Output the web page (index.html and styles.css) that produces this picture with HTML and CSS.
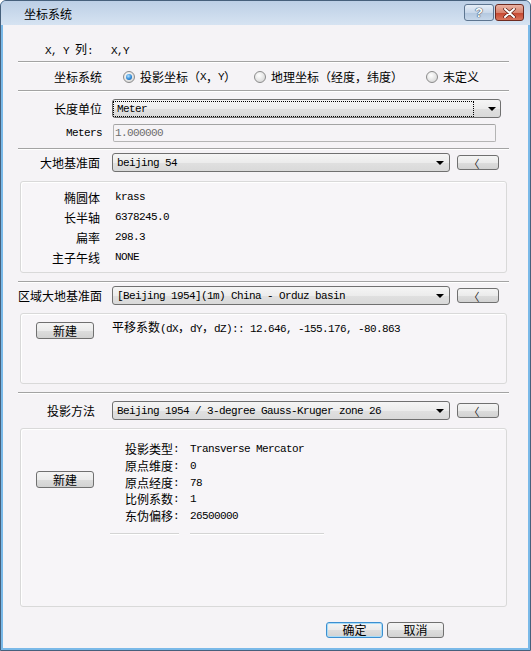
FILE: index.html
```html
<!DOCTYPE html>
<html lang="zh-CN">
<head>
    <meta charset="UTF-8">
    <title>坐标系统</title>
    <link rel="stylesheet" href="styles.css">
</head>
<body>

<div class="window">
    <!-- Title bar -->
    <div class="titlebar">
        <span class="title">坐标系统</span>
        <div class="caption-btns">
            <div class="cap-btn help">?</div>
            <div class="cap-btn close">
                <svg width="13" height="10" viewBox="0 0 13 10">
                    <path d="M2 1 L11 9 M11 1 L2 9" stroke="#5a1d14" stroke-width="3.4" stroke-linecap="round"/>
                    <path d="M2 1 L11 9 M11 1 L2 9" stroke="#fff" stroke-width="2" stroke-linecap="round"/>
                </svg>
            </div>
        </div>
    </div>

    <div class="client">
        <div class="xy-row"><span class="m">X, Y </span>列<span class="m">:   X,Y</span></div>
        <div class="sep"></div>

        <!-- coordinate system -->
        <div class="row radio-row">
            <span class="label">坐标系统</span>
            <div class="radios">
                <span class="radio checked"><span class="dot"></span>投影坐标（<span class="m">X</span>，<span class="m">Y</span>）</span>
                <span class="radio"><span class="dot"></span>地理坐标（经度，纬度）</span>
                <span class="radio"><span class="dot"></span>未定义</span>
            </div>
        </div>
        <div class="sep"></div>

        <!-- length unit -->
        <div class="row unit-row">
            <span class="label">长度单位</span>
            <div class="combo combo-unit">
                <span class="combo-text focus m">Meter</span>
                <span class="arrow"></span>
            </div>
        </div>
        <div class="row meters-row">
            <span class="label m">Meters</span>
            <div class="textbox m">1.000000</div>
        </div>
        <div class="sep sep-unit"></div>

        <!-- datum -->
        <div class="row datum-row">
            <span class="label label-datum">大地基准面</span>
            <div class="combo">
                <span class="combo-text m">beijing 54</span>
                <span class="arrow"></span>
            </div>
            <div class="btn back-btn">〈</div>
        </div>
        <div class="panel datum-panel">
            <div class="prop"><span class="prop-key">椭圆体</span><span class="m">krass</span></div>
            <div class="prop"><span class="prop-key">长半轴</span><span class="m">6378245.0</span></div>
            <div class="prop"><span class="prop-key">扁率</span><span class="m">298.3</span></div>
            <div class="prop"><span class="prop-key">主子午线</span><span class="m">NONE</span></div>
        </div>
        <div class="sep sep-datum"></div>

        <!-- regional datum -->
        <div class="row region-row">
            <span class="label">区域大地基准面</span>
            <div class="combo">
                <span class="combo-text m">[Beijing 1954](1m) China - Orduz basin</span>
                <span class="arrow"></span>
            </div>
            <div class="btn back-btn">〈</div>
        </div>
        <div class="panel shift-panel">
            <div class="btn new-btn">新建</div>
            <span class="shift-text">平移系数<span class="m">(dX</span>，<span class="m">dY</span>，<span class="m">dZ):: 12.646, -155.176, -80.863</span></span>
        </div>
        <div class="sep sep-region"></div>

        <!-- projection -->
        <div class="row proj-row">
            <span class="label label-proj">投影方法</span>
            <div class="combo">
                <span class="combo-text m">Beijing 1954 / 3-degree Gauss-Kruger zone 26</span>
                <span class="arrow"></span>
            </div>
            <div class="btn back-btn">〈</div>
        </div>
        <div class="panel proj-panel">
            <div class="proj-body">
                <div class="btn new-btn proj-new">新建</div>
                <div class="proj-info">
                    <span>投影类型<span class="m">:</span></span><span class="m">Transverse Mercator</span>
                    <span>原点维度<span class="m">:</span></span><span class="m">0</span>
                    <span>原点经度<span class="m">:</span></span><span class="m">78</span>
                    <span>比例系数<span class="m">:</span></span><span class="m">1</span>
                    <span>东伪偏移<span class="m">:</span></span><span class="m">26500000</span>
                </div>
            </div>
            <div class="proj-lines">
                <span class="uline uline-short"></span>
                <span class="uline uline-long"></span>
            </div>
        </div>

        <div class="footer">
            <div class="btn dlg-btn default">确定</div>
            <div class="btn dlg-btn">取消</div>
        </div>
    </div>
</div>

</body>
</html>
```

FILE: styles.css
```css
body {
    margin: 0;
    font-family: "Noto Sans CJK SC", sans-serif;
    font-size: 12px;
    color: #000;
    background: #fff;
}

.m {
    font-family: "Liberation Mono", "Noto Sans CJK SC", monospace;
    font-size: 11px;
    letter-spacing: -0.6px;
}

.window {
    width: 531px;
    height: 651px;
    box-sizing: border-box;
    border: 1px solid #46607c;
    border-radius: 6px 6px 0 0;
    background: #7ab9e8;
    overflow: hidden;
}

/* title bar */
.titlebar {
    height: 24px;
    display: flex;
    justify-content: space-between;
    align-items: flex-start;
    background: linear-gradient(to bottom, #bccfe6, #d6e3f2);
}

.title {
    margin: 6px 0 0 23px;
    line-height: 14px;
}

.caption-btns {
    display: flex;
    margin: 3px 6px 0 0;
}

.cap-btn {
    height: 15px;
    border: 1px solid #5d7590;
    border-radius: 3px;
    display: flex;
    align-items: center;
    justify-content: center;
    box-sizing: content-box;
}

.help {
    width: 28px;
    background: linear-gradient(to bottom, #e6eef8, #c9d8ea 50%, #b3c7df 51%, #c6d7ea);
    color: #fff;
    font-family: "Liberation Sans", sans-serif;
    font-weight: bold;
    font-size: 13px;
    text-shadow: 0 0 1px #3d5168, 0 0 1px #3d5168, 0 0 1px #3d5168;
    margin-right: 1px;
}

.close {
    width: 27px;
    border-color: #6e2a20;
    background: linear-gradient(to bottom, #eab2a3, #d9846f 50%, #c5452e 51%, #d9745c);
}

/* client area */
.client {
    margin: 0 2px;
    height: 623px;
    background: #f5f3f6;
}

.xy-row {
    height: 36px;
    box-sizing: border-box;
    padding: 17px 0 0 42px;
    line-height: 14px;
    white-space: pre;
}

.sep {
    margin-left: 15px;
    width: 491px;
    height: 1px;
    background: #a3a3a3;
    border-bottom: 1px solid #fff;
}

.row {
    display: flex;
    align-items: center;
    padding-left: 15px;
}

.label {
    width: 84px;
    text-align: right;
    flex-shrink: 0;
    line-height: 14px;
}

.label-datum {
    padding-right: 2px;
    box-sizing: border-box;
}

.label-proj {
    padding-right: 7px;
    box-sizing: border-box;
}

/* radios */
.radio-row {
    height: 27px;
}

.radios {
    display: grid;
    grid-template-columns: 131px 172px auto;
    margin-left: 21px;
}

.radio {
    display: flex;
    align-items: center;
    white-space: nowrap;
    line-height: 14px;
}

.dot {
    width: 10px;
    height: 10px;
    border: 1px solid #8b8b8b;
    border-radius: 50%;
    background: radial-gradient(circle at 40% 35%, #ffffff, #e2e2e2 60%, #cfcfcf);
    margin-right: 5px;
    position: relative;
}

.checked .dot::after {
    content: "";
    position: absolute;
    left: 2px;
    top: 2px;
    width: 6px;
    height: 6px;
    border-radius: 50%;
    background: radial-gradient(circle at 40% 35%, #b4e2ff, #2f8ad8 55%, #17508f);
}

/* combos and inputs */
.unit-row {
    margin-top: 7px;
}

.combo {
    margin-left: 10px;
    width: 338px;
    height: 19px;
    box-sizing: border-box;
    border: 1px solid #707070;
    border-radius: 3px;
    background: linear-gradient(to bottom, #f5f5f5, #ececec 50%, #e0e0e0 51%, #d9d9d9);
    display: flex;
    align-items: center;
    padding: 0 5px 0 4px;
}

.combo-unit {
    width: 389px;
    padding: 1px 4px 1px 1px;
}

.combo-text {
    flex: 1;
    white-space: nowrap;
    overflow: hidden;
    line-height: 14px;
}

.combo-text.focus {
    outline: 1px dotted #000;
    padding-left: 3px;
    margin-right: 15px;
}

.arrow {
    width: 0;
    height: 0;
    border-left: 4px solid transparent;
    border-right: 4px solid transparent;
    border-top: 4px solid #000;
    margin-top: 1px;
}

.meters-row {
    margin-top: 6px;
}

.textbox {
    margin-left: 11px;
    width: 383px;
    height: 18px;
    box-sizing: border-box;
    border: 1px solid #b4b4b4;
    border-top-color: #a3a3a3;
    border-radius: 2px;
    color: #6d6d6d;
    padding-left: 1px;
    line-height: 16px;
}

.sep-unit {
    margin-top: 6px;
}

.datum-row {
    margin-top: 3px;
}

.btn {
    box-sizing: border-box;
    border: 1px solid #707070;
    border-radius: 3px;
    background: linear-gradient(to bottom, #f4f4f4, #ebebeb 50%, #dddddd 51%, #d2d2d2);
    display: flex;
    align-items: center;
    justify-content: center;
    line-height: 14px;
}

.back-btn {
    margin-left: 7px;
    width: 42px;
    height: 15px;
    font-size: 11px;
    color: #222;
    padding-right: 8px;
}

/* panels */
.panel {
    margin-left: 17px;
    width: 487px;
    box-sizing: border-box;
    border: 1px solid #d9d9d9;
    border-radius: 3px;
    box-shadow: inset 1px 1px 0 #fff;
    background: #f7f5f8;
}

.datum-panel {
    margin-top: 9px;
    height: 92px;
    padding-top: 5px;
}

.prop {
    display: flex;
    align-items: center;
    height: 20px;
}

.prop-key {
    width: 79px;
    text-align: right;
    margin-right: 15px;
}

.sep-datum {
    margin-top: 8px;
}

.region-row {
    margin-top: 3px;
}

.shift-panel {
    margin-top: 8px;
    height: 71px;
    display: flex;
    align-items: flex-start;
    padding: 8px 0 0 15px;
}

.new-btn {
    width: 58px;
    height: 17px;
    flex-shrink: 0;
}

.shift-text {
    margin: -2px 0 0 18px;
    line-height: 14px;
    white-space: pre;
}

.sep-region {
    margin-top: 8px;
}

.proj-row {
    margin-top: 7px;
}

.proj-panel {
    margin-top: 8px;
    height: 179px;
}

.proj-body {
    display: flex;
    align-items: flex-start;
    padding: 12px 0 0 15px;
}

.proj-new {
    margin-top: 30px;
}

.proj-info {
    margin-left: 31px;
    display: grid;
    grid-template-columns: 65px auto;
    grid-auto-rows: 16.7px;
    line-height: 14px;
}

.proj-info > span {
    display: flex;
    align-items: center;
    white-space: nowrap;
}

.proj-lines {
    display: flex;
    gap: 11px;
    margin-top: 9px;
    padding-left: 89px;
}

.uline {
    height: 1px;
    background: #d4d4d4;
    border-bottom: 1px solid #fff;
}

.uline-short {
    width: 69px;
}

.uline-long {
    width: 134px;
}

/* footer buttons */
.footer {
    display: flex;
    gap: 4px;
    margin-top: 15px;
    padding-left: 323px;
}

.dlg-btn {
    width: 57px;
    height: 16px;
}

.dlg-btn.default {
    border-color: #3c8fd0;
    box-shadow: inset 0 0 0 1px #a9dcf7;
}
```
